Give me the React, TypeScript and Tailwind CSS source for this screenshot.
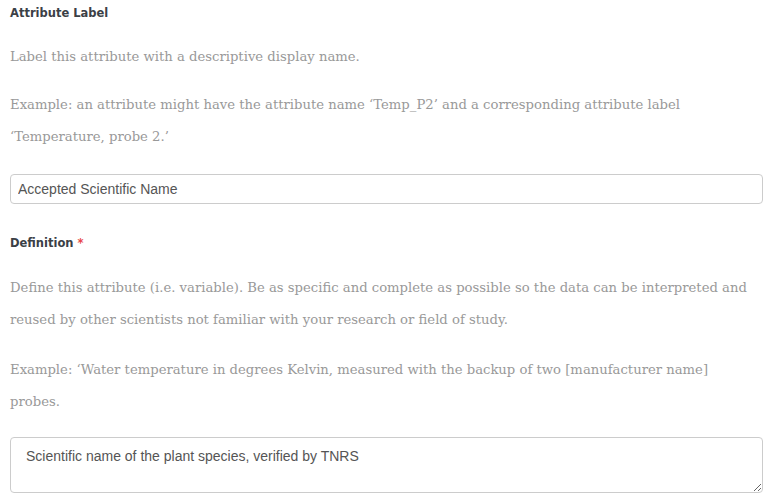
import React from "react";

export default function App() {
  return (
    <div className="w-[769px] h-[501px] bg-white pl-[10px] pr-[6px] pt-[5px] overflow-hidden">
      <h3 className="text-[11.5px] leading-[16px] font-bold text-[#3b4046] [font-family:'DejaVu_Sans','Liberation_Sans',sans-serif]">
        Attribute Label
      </h3>
      <p className="mt-[20px] text-[13.2px] leading-[32px] text-[#999999] [font-family:'DejaVu_Serif',Georgia,serif]">
        Label this attribute with a descriptive display name.
      </p>
      <p className="mt-[16px] text-[13.2px] leading-[32px] text-[#999999] [font-family:'DejaVu_Serif',Georgia,serif]">
        Example: an attribute might have the attribute name ‘Temp_P2’ and a corresponding attribute label
        <br />
        ‘Temperature, probe 2.’
      </p>
      <input
        type="text"
        defaultValue="Accepted Scientific Name"
        className="mt-[21px] block w-[753px] h-[30px] border border-[#cccccc] rounded-[4px] px-[7px] text-[14px] text-[#555555] [font-family:'Liberation_Sans',Arial,sans-serif] outline-none"
      />
      <h3 className="mt-[31px] text-[11.5px] leading-[16px] font-bold text-[#3b4046] [font-family:'DejaVu_Sans','Liberation_Sans',sans-serif]">
        Definition <span className="text-[#e8474a]">*</span>
      </h3>
      <p className="mt-[21px] text-[13.2px] leading-[32px] text-[#999999] [font-family:'DejaVu_Serif',Georgia,serif]">
        Define this attribute (i.e. variable). Be as specific and complete as possible so the data can be interpreted and
        <br />
        reused by other scientists not familiar with your research or field of study.
      </p>
      <p className="mt-[18px] text-[13.2px] leading-[32px] text-[#999999] [font-family:'DejaVu_Serif',Georgia,serif]">
        Example: ‘Water temperature in degrees Kelvin, measured with the backup of two [manufacturer name]
        <br />
        probes.
      </p>
      <textarea
        defaultValue="Scientific name of the plant species, verified by TNRS"
        className="mt-[19px] block w-[753px] h-[56px] border border-[#cccccc] rounded-[4px] px-[15px] py-[8px] text-[14px] leading-[20px] text-[#555555] [font-family:'Liberation_Sans',Arial,sans-serif] outline-none"
      />
    </div>
  );
}
